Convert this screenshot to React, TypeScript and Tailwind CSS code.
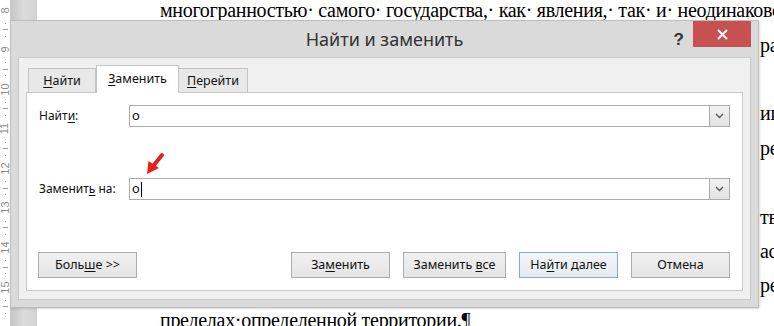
import React from 'react'

const U = ({ children }: { children: React.ReactNode }) => (
  <span className="underline decoration-1 underline-offset-2">{children}</span>
)

function Ruler() {
  const marks = [8, 9, 10, 11, 12, 13, 14, 15]
  return (
    <div className="flex w-[11px] shrink-0 flex-col border-r border-[#c9c9c9] bg-white font-['Liberation_Sans',sans-serif] text-[11px] leading-none text-[#8c8c8c]">
      {marks.map((m) => (
        <div key={m} className="flex h-[39.6px] shrink-0 flex-col items-center">
          <div className="flex h-[20px] items-center justify-center">
            <span className="-rotate-90">{m}</span>
          </div>
          <div className="flex h-[6.5px] items-center">
            <div className="h-px w-px bg-[#9a9a9a]" />
          </div>
          <div className="flex h-[6.5px] items-center">
            <div className="h-px w-[5px] bg-[#9a9a9a]" />
          </div>
          <div className="flex h-[6.5px] items-center">
            <div className="h-px w-px bg-[#9a9a9a]" />
          </div>
        </div>
      ))}
    </div>
  )
}

function TailLine({ hidden, tail }: { hidden: string; tail: string }) {
  return (
    <div className="flex h-[34.4px] items-center whitespace-nowrap">
      <span className="w-[600px] shrink-0 overflow-hidden">{hidden}</span>
      <span>{tail}</span>
    </div>
  )
}

function Page() {
  return (
    <div className="flex-1 overflow-hidden bg-white pl-[123px] font-['Liberation_Serif',serif] text-[20px] tracking-[-0.3px] text-black">
      <div className="-mt-[7px]">
        <div className="flex h-[34.4px] items-center whitespace-nowrap">
          многогранностью· самого· государства,· как· явления,· так· и· неодинаковостью
        </div>
        <TailLine hidden="подходов· к· его· изучению· и· пониманию· в· разных· об" tail="разцах" />
        <div className="h-[34.4px]" />
        <TailLine hidden="Государство· —· это· особая· организация· политической· вл" tail="иги" />
        <TailLine hidden="общества,· обладающая· аппаратом· управления· и· прину" tail="рено" />
        <div className="h-[34.4px]" />
        <TailLine hidden="Признаки· государства:· наличие· публичной· власти,· сущес" tail="твуют" />
        <TailLine hidden="территория,· население,· суверенитет,· налоги,· право,· кл" tail="асс" />
        <TailLine hidden="Публичная· власть· осуществляется· на· всей· территории· п" tail="ред" />
        <div className="flex h-[34.4px] items-center whitespace-nowrap">пределах·определенной территории.¶</div>
      </div>
    </div>
  )
}

function Field({ label, value, caret }: { label: React.ReactNode; value: string; caret?: boolean }) {
  return (
    <div className="flex h-[22px] items-center">
      <div className="w-[91px] shrink-0 pl-px">{label}</div>
      <div className="flex h-full flex-1 border border-[#abadb3] bg-white">
        <div className="flex flex-1 items-center pl-[2px] text-[13px]">
          <span>{value}</span>
          {caret && <span className="ml-px h-[15px] w-px bg-black" />}
        </div>
        <div className="flex w-[20px] items-center justify-center border-l border-[#acacac] bg-gradient-to-b from-[#f2f2f2] to-[#e2e2e2]">
          <svg width="9" height="6" viewBox="0 0 9 6">
            <path d="M1 1 L4.5 4.5 L8 1" fill="none" stroke="#5a5a5a" strokeWidth="1.4" />
          </svg>
        </div>
      </div>
    </div>
  )
}

function Btn({ children, w, primary }: { children: React.ReactNode; w: string; primary?: boolean }) {
  return (
    <div
      className={`flex h-[26px] ${w} items-center justify-center border text-[12.5px] ${
        primary ? 'border-[#78aee5] bg-gradient-to-b from-[#f3f5f7] to-[#e8ebee]' : 'border-[#acacac] bg-gradient-to-b from-[#f0f0f0] to-[#e5e5e5]'
      }`}
    >
      {children}
    </div>
  )
}

function Dialog() {
  return (
    <div className="absolute left-[10px] top-[20px] flex h-[288px] w-[749px] flex-col border border-[#bdbdbd] bg-[#dadada] font-['Noto_Sans',sans-serif] text-[12px] text-[#111] shadow-[1px_1px_2px_rgba(0,0,0,0.15)]">
      <div className="grid h-[36px] shrink-0 grid-cols-[1fr_auto_1fr]">
        <div />
        <div className="flex items-center text-[18px] text-[#333]">Найти и заменить</div>
        <div className="flex items-start justify-end pr-[7px]">
          <span className="mr-[9px] mt-[6px] font-['Liberation_Sans',sans-serif] text-[17px] font-bold text-[#333]">?</span>
          <div className="flex h-[26px] w-[58px] items-center justify-center bg-[#c75050]">
            <svg width="11" height="11" viewBox="0 0 11 11">
              <path d="M1 1 L10 10 M10 1 L1 10" stroke="white" strokeWidth="2" />
            </svg>
          </div>
        </div>
      </div>

      <div className="mx-[7px] mb-[7px] flex flex-1 flex-col border border-[#c8c8c8] bg-[#f0f0f0] px-[7px] pb-[8px] pt-[7px]">
        <div className="ml-[2px] flex h-[27px] items-end">
          <div className="flex h-[24px] w-[68px] items-center justify-center border border-b-0 border-[#c3c3c3] bg-[#e8e8e8] pt-px text-[12.5px]">
            <span><U>Н</U>айти</span>
          </div>
          <div className="relative z-10 -mb-px flex h-[28px] w-[83px] items-center justify-center border border-b-0 border-[#c3c3c3] bg-white text-[12.5px]">
            <span><U>З</U>аменить</span>
          </div>
          <div className="flex h-[24px] w-[69px] items-center justify-center border border-b-0 border-l-0 border-[#c3c3c3] bg-[#e8e8e8] pt-px text-[12.5px]">
            <span><U>П</U>ерейти</span>
          </div>
        </div>

        <div className="flex flex-1 flex-col border border-[#c9c9c9] bg-white pb-[12px] pl-[11px] pr-[12px] pt-[12px]">
          <Field label={<span>Найт<U>и</U>:</span>} value="о" />
          <div className="mt-[51px]">
            <Field label={<span>Заменит<U>ь</U> на:</span>} value="о" caret />
          </div>
          <div className="mt-auto flex items-center">
            <Btn w="w-[99px]">
              <span>Боль<U>ш</U>е &gt;&gt;</span>
            </Btn>
            <div className="flex-1" />
            <div className="flex gap-[13px]">
              <Btn w="w-[99px]">
                <span>За<U>м</U>енить</span>
              </Btn>
              <Btn w="w-[103px]">
                <span>Заменить <U>в</U>се</span>
              </Btn>
              <Btn w="w-[99px]" primary>
                <span>На<U>й</U>ти далее</span>
              </Btn>
              <Btn w="w-[99px]">
                <span>Отмена</span>
              </Btn>
            </div>
          </div>
        </div>
      </div>
    </div>
  )
}

export default function App() {
  return (
    <div className="relative flex h-[326px] w-[774px] overflow-hidden bg-white">
      <Ruler />
      <div className="w-[26px] shrink-0 bg-gradient-to-r from-[#c6c6c6] via-[#dcdcdc] to-[#d2d2d2]" />
      <Page />
      <Dialog />
      <svg className="absolute left-[144px] top-[151px]" width="22" height="26" viewBox="0 0 22 26">
        <path d="M18 4 L10 14" stroke="#e8201a" strokeWidth="4" strokeLinecap="round" />
        <path d="M3 23 L4.5 10 L15 17 Z" fill="#e8201a" />
      </svg>
    </div>
  )
}
